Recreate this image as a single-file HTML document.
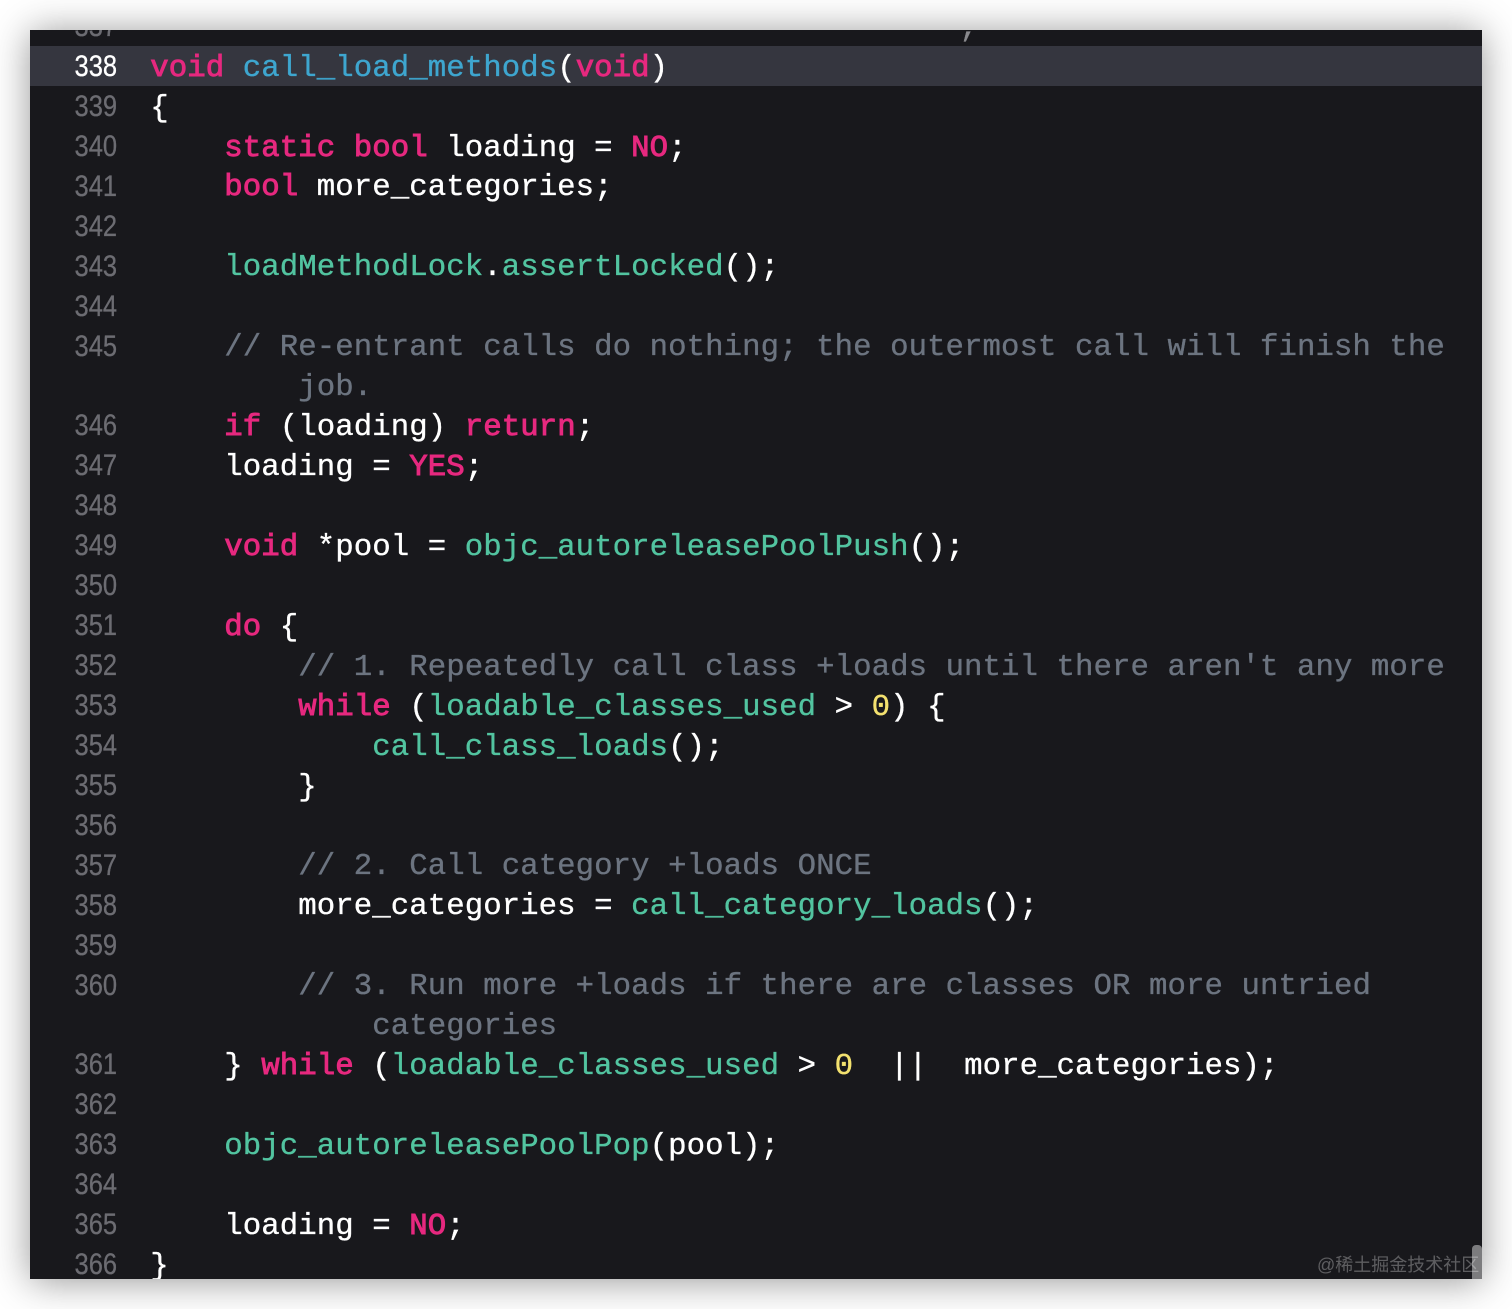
<!DOCTYPE html>
<html><head><meta charset="utf-8">
<style>
html,body{margin:0;padding:0;background:#fff;width:1512px;height:1309px;overflow:hidden}
#w{position:absolute;left:30px;top:30px;width:1452px;height:1249px;background:#18181c;overflow:hidden}
#s{position:absolute;left:30px;top:30px;width:1452px;height:1249px;box-shadow:0 2px 36px rgba(0,0,0,.42)}
#hl{position:absolute;left:0;top:16px;width:1452px;height:40px;background:#35363f}
pre{position:absolute;margin:0;font-family:"Liberation Mono",monospace;font-size:30.72px;line-height:39.93px;color:#fff;white-space:pre;-webkit-font-smoothing:antialiased}
#c{left:120.3px;top:-21.3px;letter-spacing:.06px;-webkit-text-stroke:.35px currentColor}
#g{right:1365px;top:-23px;font-family:"Liberation Sans",sans-serif;font-size:30px;color:#6c6c72;text-align:right;transform:scaleX(.85);transform-origin:right top;-webkit-text-stroke:.3px currentColor}
#g b{font-weight:normal;color:#fff}
.k{color:#e6287f;-webkit-text-stroke:.9px #e6287f}.f{color:#3ea6cf}.g{color:#52c4a0}.m{color:#6c7480}.n{color:#f3e16f}
.t{position:relative;left:-4px;color:#8a8a8e}
#wm{position:absolute;left:1287px;top:1223px;font:18px/24px "Liberation Sans","Noto Sans CJK SC",sans-serif;color:rgba(255,255,255,.3);white-space:nowrap}
#sb{position:absolute;left:1442px;top:1215px;width:10px;height:34px;background:#7c7c7e;border-radius:4px 4px 0 0}
</style></head><body>
<div id="s"></div>
<div id="w">
<div id="hl"></div>
<pre id="g">337
<b>338</b>
339
340
341
342
343
344
345

346
347
348
349
350
351
352
353
354
355
356
357
358
359
360

361
362
363
364
365
366</pre>
<pre id="c">                                            <span class="t">,</span>
<span class="k">void</span> <span class="f">call_load_methods</span>(<span class="k">void</span>)
{
    <span class="k">static</span> <span class="k">bool</span> loading = <span class="k">NO</span>;
    <span class="k">bool</span> more_categories;

    <span class="g">loadMethodLock</span>.<span class="g">assertLocked</span>();

    <span class="m">// Re-entrant calls do nothing; the outermost call will finish the</span>
        <span class="m">job.</span>
    <span class="k">if</span> (loading) <span class="k">return</span>;
    loading = <span class="k">YES</span>;

    <span class="k">void</span> *pool = <span class="g">objc_autoreleasePoolPush</span>();

    <span class="k">do</span> {
        <span class="m">// 1. Repeatedly call class +loads until there aren't any more</span>
        <span class="k">while</span> (<span class="g">loadable_classes_used</span> &gt; <span class="n">0</span>) {
            <span class="g">call_class_loads</span>();
        }

        <span class="m">// 2. Call category +loads ONCE</span>
        more_categories = <span class="g">call_category_loads</span>();

        <span class="m">// 3. Run more +loads if there are classes OR more untried</span>
            <span class="m">categories</span>
    } <span class="k">while</span> (<span class="g">loadable_classes_used</span> &gt; <span class="n">0</span>  ||  more_categories);

    <span class="g">objc_autoreleasePoolPop</span>(pool);

    loading = <span class="k">NO</span>;
}</pre>
<div id="sb"></div>
<div id="wm">@稀土掘金技术社区</div>
</div>
</body></html>
